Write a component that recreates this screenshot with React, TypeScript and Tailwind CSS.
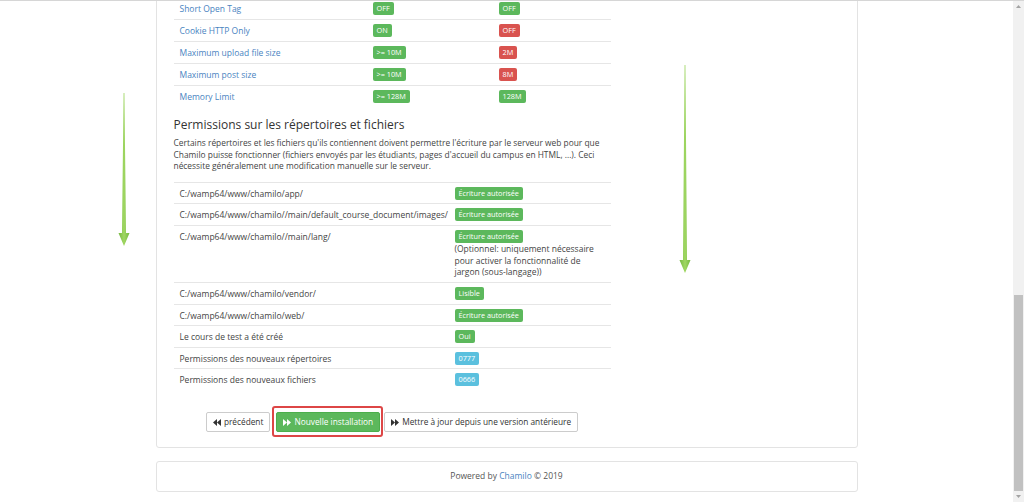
import type { ReactNode } from 'react'

const font = { fontFamily: '"Open Sans", "Liberation Sans", sans-serif' }

type Tone = 'green' | 'red' | 'blue'

const toneClass: Record<Tone, string> = {
  green: 'bg-[#5cb85c]',
  red: 'bg-[#d9534f]',
  blue: 'bg-[#5bc0de]',
}

function Badge({ tone = 'green', children }: { tone?: Tone; children: ReactNode }) {
  return (
    <span
      className={`${toneClass[tone]} inline-flex h-[13px] items-center rounded-[2px] px-[4px] text-[7.3px] leading-none text-white`}
    >
      {children}
    </span>
  )
}

const settings: { name: string; needed: string; current: string; tone: Tone }[] = [
  { name: 'Short Open Tag', needed: 'OFF', current: 'OFF', tone: 'green' },
  { name: 'Cookie HTTP Only', needed: 'ON', current: 'OFF', tone: 'red' },
  { name: 'Maximum upload file size', needed: '>= 10M', current: '2M', tone: 'red' },
  { name: 'Maximum post size', needed: '>= 10M', current: '8M', tone: 'red' },
  { name: 'Memory Limit', needed: '>= 128M', current: '128M', tone: 'green' },
]

const folders: { path: string; badge: string; tone: Tone; note?: string; h: string }[] = [
  { path: 'C:/wamp64/www/chamilo/app/', badge: 'Écriture autorisée', tone: 'green', h: 'h-[21.5px]' },
  { path: 'C:/wamp64/www/chamilo//main/default_course_document/images/', badge: 'Écriture autorisée', tone: 'green', h: 'h-[22px]' },
  {
    path: 'C:/wamp64/www/chamilo//main/lang/',
    badge: 'Écriture autorisée',
    tone: 'green',
    note: '(Optionnel: uniquement nécessaire pour activer la fonctionnalité de jargon (sous-langage))',
    h: 'h-[57px]',
  },
  { path: 'C:/wamp64/www/chamilo/vendor/', badge: 'Lisible', tone: 'green', h: 'h-[21.5px]' },
  { path: 'C:/wamp64/www/chamilo/web/', badge: 'Écriture autorisée', tone: 'green', h: 'h-[21.5px]' },
  { path: 'Le cours de test a été créé', badge: 'Oui', tone: 'green', h: 'h-[21.5px]' },
  { path: 'Permissions des nouveaux répertoires', badge: '0777', tone: 'blue', h: 'h-[21.5px]' },
  { path: 'Permissions des nouveaux fichiers', badge: '0666', tone: 'blue', h: 'h-[22px]' },
]

function Forward({ back = false }: { back?: boolean }) {
  return (
    <svg width="8" height="7" viewBox="0 0 8 7" className={back ? 'rotate-180' : ''}>
      <path d="M0 0 L4 3.5 L0 7 Z M4 0 L8 3.5 L4 7 Z" fill="currentColor" />
    </svg>
  )
}

function GreenArrow({ height }: { height: number }) {
  return (
    <svg width="14" height={height} viewBox={`0 0 14 ${height}`}>
      <defs>
        <linearGradient id={`g${height}`} x1="0" y1="0" x2="1" y2="0">
          <stop offset="0" stopColor="#6fb536" />
          <stop offset="0.5" stopColor="#9bd55a" />
          <stop offset="1" stopColor="#6fb536" />
        </linearGradient>
      </defs>
      <path
        d={`M6.6 0 L7.4 0 L9 ${height - 13} L12.5 ${height - 13} L7 ${height} L1.5 ${height - 13} L5 ${height - 13} Z`}
        fill={`url(#g${height})`}
        opacity="0.95"
      />
    </svg>
  )
}

export default function App() {
  return (
    <div className="relative flex h-[502px] w-[1024px] overflow-hidden bg-white text-[#555]" style={font}>
      {/* page */}
      <div className="flex-1 overflow-hidden border-t border-[#d6d6d6]">
        <div className="mx-auto -mt-[23px] w-[702px] rounded-[3px] border border-[#e3e3e3] px-[17px] pb-[15px] pt-[18px]">
          <div className="w-[437px]">
            {/* requirements table */}
            <div>
              {settings.map((s) => (
                <div key={s.name} className="grid h-[22px] grid-cols-[193px_126px_1fr] border-t border-[#e6e6e6] text-[8.5px] leading-[11.5px]">
                  <div className="pl-[6px] pt-[5px] text-[#4a84bf]">{s.name}</div>
                  <div className="pl-[6px] pt-[4px]">
                    <Badge>{s.needed}</Badge>
                  </div>
                  <div className="pl-[6px] pt-[4px]">
                    <Badge tone={s.tone}>{s.current}</Badge>
                  </div>
                </div>
              ))}
            </div>

            <h3 className="mt-[10px] text-[12px] leading-[16px] text-[#333]">Permissions sur les répertoires et fichiers</h3>
            <p className="mt-[4px] pr-[6px] text-[8.4px] leading-[11.5px] text-[#444]">
              Certains répertoires et les fichiers qu'ils contiennent doivent permettre l'écriture par le serveur web pour que
              Chamilo puisse fonctionner (fichiers envoyés par les étudiants, pages d'accueil du campus en HTML, ...). Ceci
              nécessite généralement une modification manuelle sur le serveur.
            </p>

            {/* folders table */}
            <div className="mt-[10px]">
              {folders.map((f) => (
                <div key={f.path} className={`${f.h} grid grid-cols-[276px_1fr] border-t border-[#e6e6e6] text-[8.5px] leading-[11.5px]`}>
                  <div className="pl-[6px] pt-[5px] text-[#444]">{f.path}</div>
                  <div className="pl-[5px] pt-[4px] pr-[14px]">
                    <Badge tone={f.tone}>{f.badge}</Badge>
                    {f.note && <div className="text-[#444]">{f.note}</div>}
                  </div>
                </div>
              ))}
            </div>

            {/* actions */}
            <div className="mt-[22px] flex justify-center text-[8.3px]">
              <button className="flex h-[20px] items-center gap-[3px] rounded-[2px] border border-[#ccc] bg-white px-[6px] text-[#333]">
                <Forward back />
                précédent
              </button>
              <span className="relative ml-[6px]">
                <button className="flex h-[20px] items-center gap-[3px] rounded-[2px] border border-[#4cae4c] bg-[#5cb85c] px-[6px] text-white">
                  <Forward />
                  Nouvelle installation
                </button>
                <span className="absolute -bottom-[5px] -left-[4px] -right-[3px] -top-[6px] rounded-[3px] border-2 border-[#dd4646]" />
              </span>
              <button className="ml-[4px] flex h-[20px] items-center gap-[3px] rounded-[2px] border border-[#ccc] bg-white px-[6px] text-[#333]">
                <Forward />
                Mettre à jour depuis une version antérieure
              </button>
            </div>
          </div>
        </div>

        {/* footer */}
        <div className="mx-auto mt-[13px] flex h-[31px] w-[702px] items-center justify-center rounded-[3px] border border-[#e3e3e3] text-[8.5px] text-[#555]">
          <span>
            Powered by <span className="text-[#4a84bf]">Chamilo</span> © 2019
          </span>
        </div>
      </div>

      {/* scrollbar */}
      <div className="flex w-[11px] flex-col border-t border-[#d6d6d6] bg-[#f1f1f1]">
        <div className="flex h-[11px] items-center justify-center">
          <svg width="5" height="3" viewBox="0 0 5 3">
            <path d="M0 3 L2.5 0 L5 3 Z" fill="#a3a3a3" />
          </svg>
        </div>
        <div className="flex-1" />
        <div className="mx-[1px] h-[196px] bg-[#c1c1c1]" />
        <div className="flex h-[11px] items-center justify-center">
          <svg width="5" height="3" viewBox="0 0 5 3">
            <path d="M0 0 L2.5 3 L5 0 Z" fill="#a3a3a3" />
          </svg>
        </div>
      </div>

      {/* annotation arrows */}
      <div className="absolute left-[117px] top-[93px]">
        <GreenArrow height={153} />
      </div>
      <div className="absolute left-[678px] top-[65px]">
        <GreenArrow height={208} />
      </div>
    </div>
  )
}
